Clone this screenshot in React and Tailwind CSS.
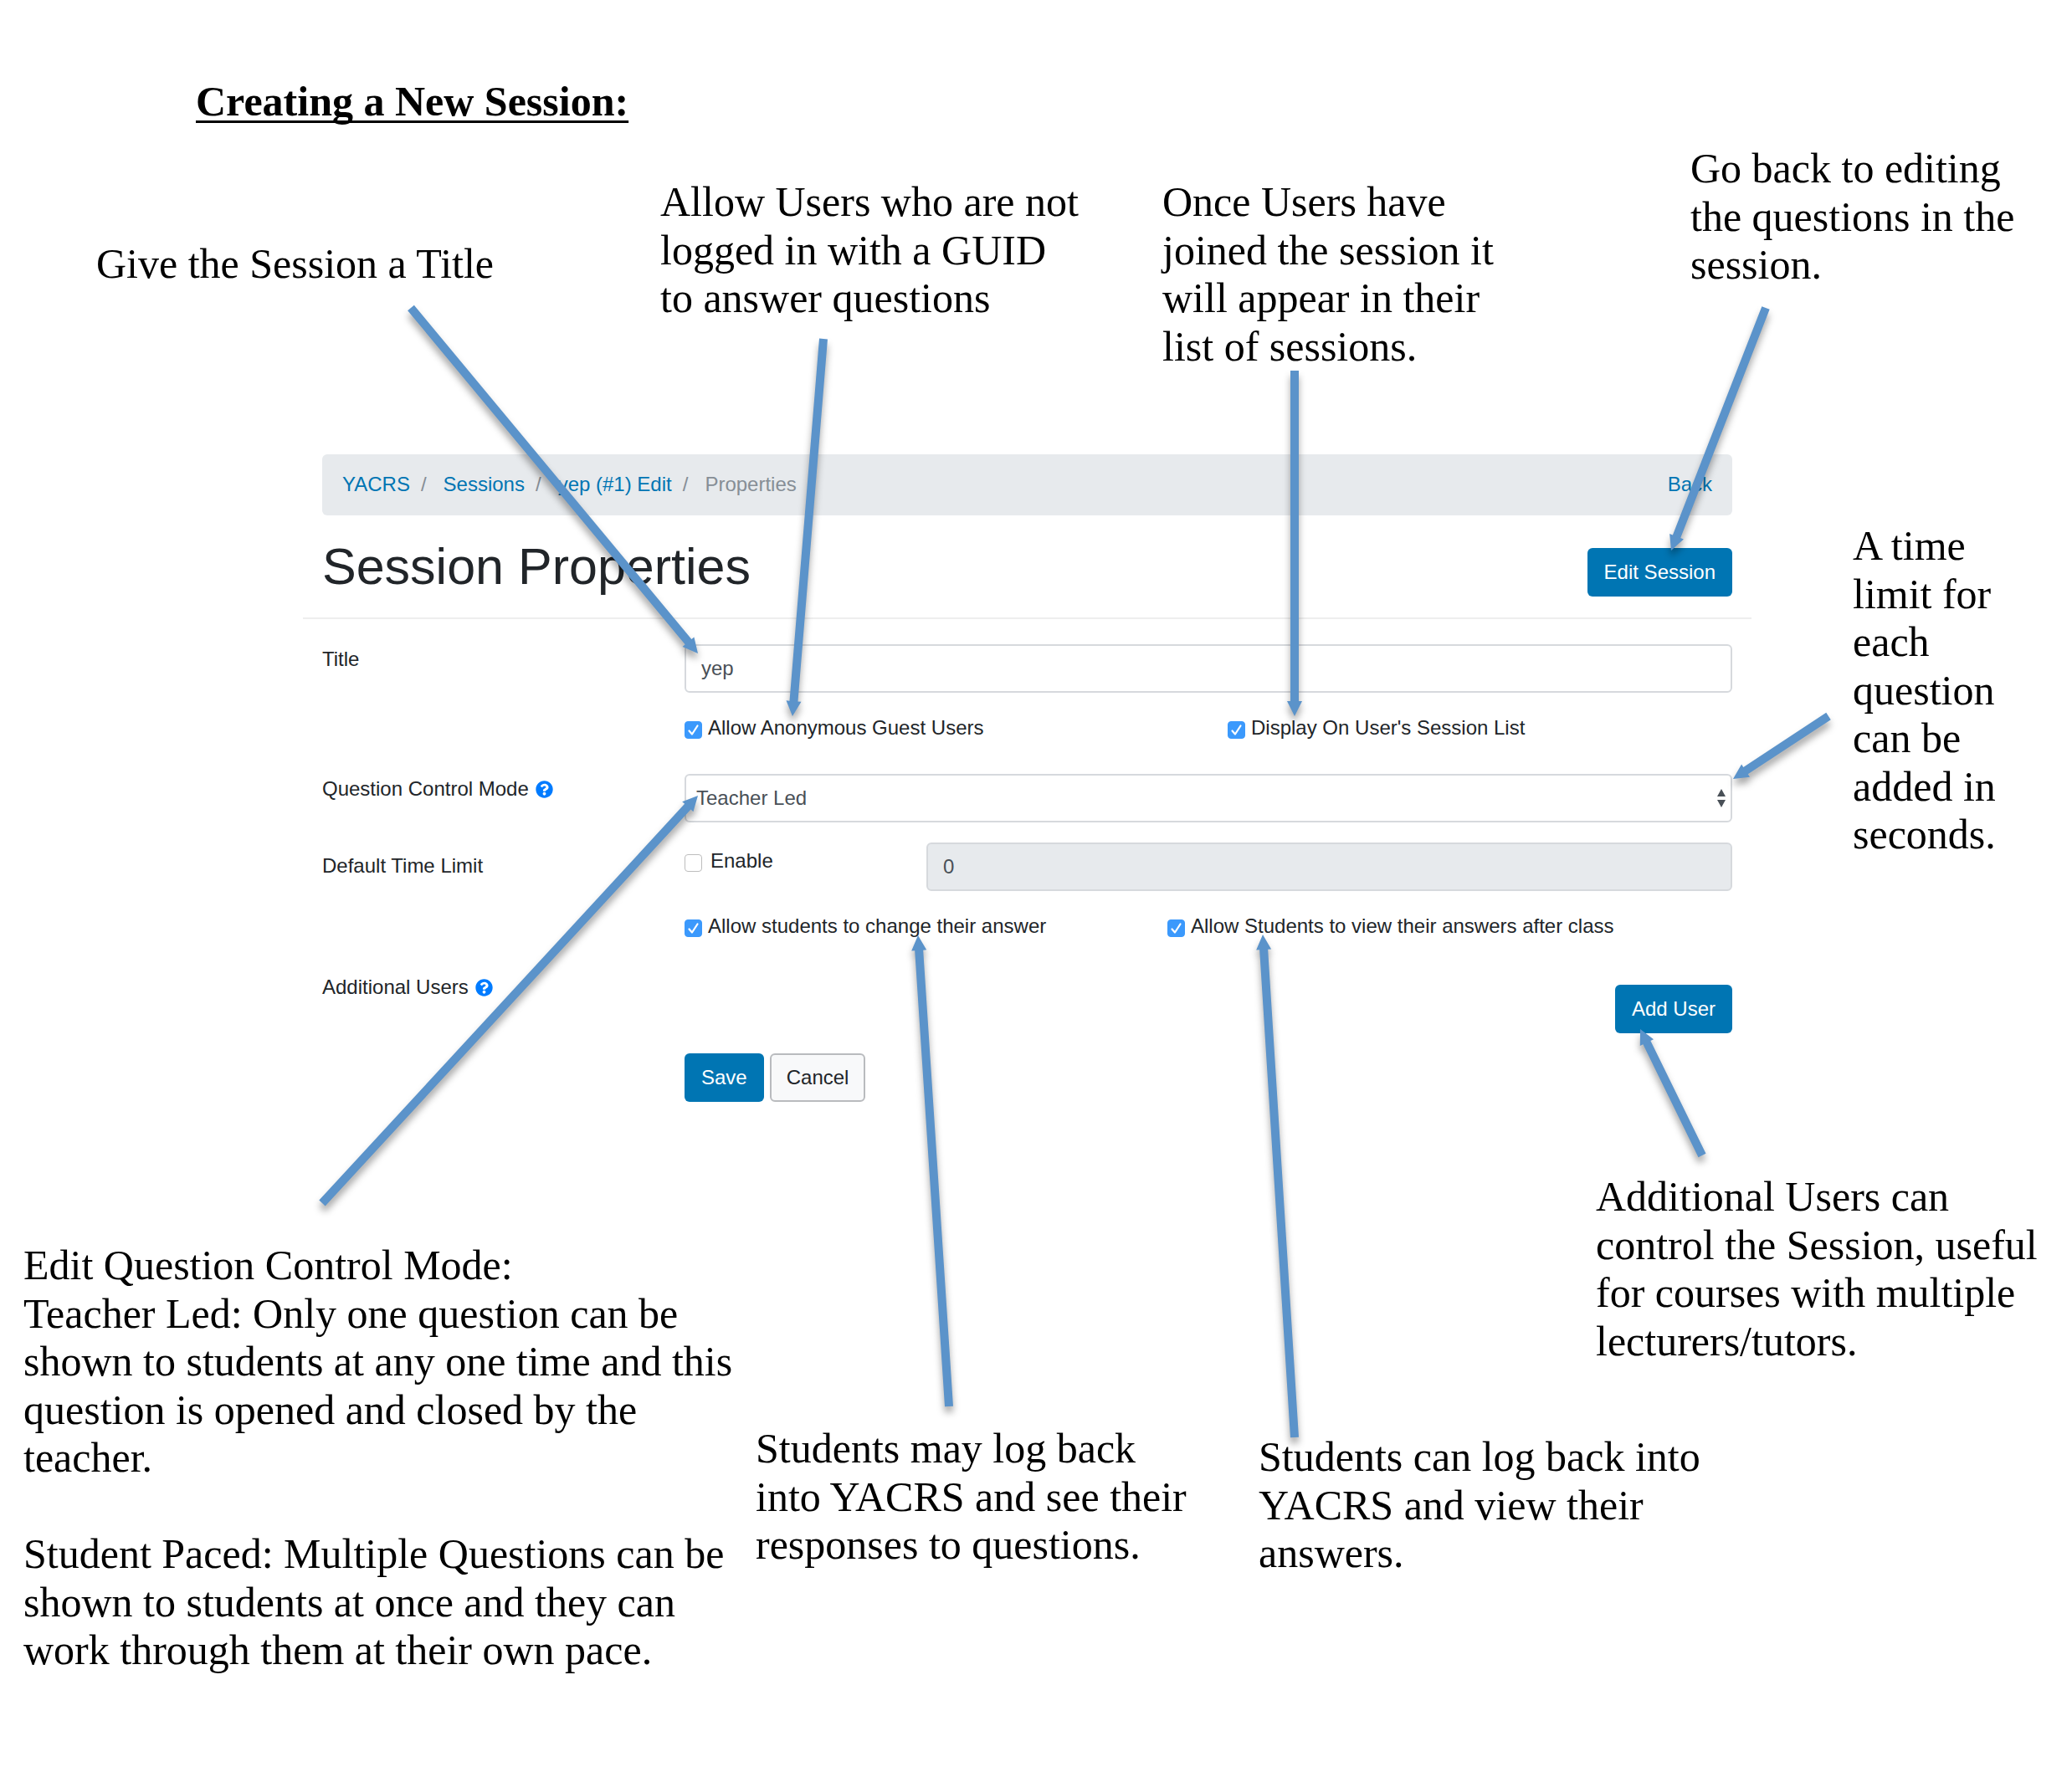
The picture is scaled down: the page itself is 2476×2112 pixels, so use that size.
import React from "react";
import { FaQuestionCircle } from "react-icons/fa";

const notes = [
  { place: "left-[115px] top-[287px]", text: "Give the Session a Title" },
  {
    place: "left-[789px] top-[213px]",
    text: "Allow Users who are not\nlogged in with a GUID\nto answer questions",
  },
  {
    place: "left-[1389px] top-[213px]",
    text: "Once Users have\njoined the session it\nwill appear in their\nlist of sessions.",
  },
  {
    place: "left-[2020px] top-[173px]",
    text: "Go back to editing\nthe questions in the\nsession.",
  },
  {
    place: "left-[2214px] top-[624px]",
    text: "A time\nlimit for\neach\nquestion\ncan be\nadded in\nseconds.",
  },
  {
    place: "left-[1907px] top-[1402px]",
    text: "Additional Users can\ncontrol the Session, useful\nfor courses with multiple\nlecturers/tutors.",
  },
  {
    place: "left-[28px] top-[1484px]",
    text: "Edit Question Control Mode:\nTeacher Led: Only one question can be\nshown to students at any one time and this\nquestion is opened and closed by the\nteacher.\n\nStudent Paced: Multiple Questions can be\nshown to students at once and they can\nwork through them at their own pace.",
  },
  {
    place: "left-[903px] top-[1703px]",
    text: "Students may log back\ninto YACRS and see their\nresponses to questions.",
  },
  {
    place: "left-[1504px] top-[1713px]",
    text: "Students can log back into\nYACRS and view their\nanswers.",
  },
];

// Each arrow runs from its note to the control it explains: [x1, y1, x2, y2].
const arrows = [
  [491, 368, 834, 781],
  [984, 405, 947, 856],
  [1547, 443, 1547, 856],
  [2110, 368, 1997, 658],
  [2185, 856, 2071, 931],
  [385, 1438, 834, 951],
  [1134, 1681, 1097, 1118],
  [1547, 1718, 1509, 1117],
  [2034, 1381, 1960, 1230],
];

function Arrow({ from }) {
  const [x1, y1, x2, y2] = from;
  const length = Math.hypot(x2 - x1, y2 - y1);
  const angle = (Math.atan2(y2 - y1, x2 - x1) * 180) / Math.PI;
  const neck = length - 18;
  return (
    <polygon
      fill="#5b93ca"
      transform={`translate(${x1} ${y1}) rotate(${angle})`}
      points={`0,-5 ${neck},-5 ${neck},-9 ${length},0 ${neck},9 ${neck},5 0,5`}
    />
  );
}

function Check({ id, label, checked = false, gap = "gap-[7px]" }) {
  return (
    <div className={`flex items-center ${gap}`}>
      <span className="relative mt-1 block size-[21px] shrink-0">
        <input
          id={id}
          type="checkbox"
          defaultChecked={checked}
          className="peer block size-full appearance-none rounded-[4px] border border-[#bdbdbd] bg-white checked:border-[#3b99fc] checked:bg-[#3b99fc]"
        />
        <svg
          viewBox="0 0 21 21"
          className="pointer-events-none absolute inset-0 hidden size-full peer-checked:block"
          fill="none"
          stroke="white"
          strokeWidth="2.2"
          strokeLinecap="round"
          strokeLinejoin="round"
        >
          <path d="M5.5 11.5 9 15.5 15.5 5.5" />
        </svg>
      </span>
      <label htmlFor={id}>{label}</label>
    </div>
  );
}

function Help({ label }) {
  return (
    <button type="button" aria-label={label} className="text-[21px] text-[#007bff]">
      <FaQuestionCircle />
    </button>
  );
}

function Row({ label, children, className = "" }) {
  return (
    <div className={`flex items-start ${className}`}>
      <div className="w-[433px] shrink-0">{label}</div>
      <div className="min-w-0 flex-1">{children}</div>
    </div>
  );
}

const primary = "h-[58px] rounded-[6px] bg-[#0075b3] px-5 text-white";
const field = "h-[58px] w-full rounded-[6px] border-2 border-[#d6d9dd] text-[#495057]";

export default function App() {
  return (
    <div className="relative min-h-screen overflow-hidden bg-white text-black">
      <h1 className="pt-[92px] pl-[234px] font-['Liberation_Serif',serif] text-[50px] leading-[58px] font-bold underline decoration-[3px] underline-offset-[6px] [text-decoration-skip-ink:none]">
        Creating a New Session:
      </h1>

      <main className="mt-[393px] mr-[406px] ml-[385px] font-['Liberation_Sans',sans-serif] text-[24px] leading-9 text-[#212529]">
        <nav
          aria-label="Breadcrumb"
          className="flex h-[73px] items-center justify-between rounded-[6px] bg-[#e7eaed] px-6 pb-[2px] text-[#0075b3]"
        >
          <ol className="flex">
            <li><a href="#home">YACRS</a></li>
            <li className="mr-5 ml-[13px] text-[#868e96]">/</li>
            <li><a href="#sessions">Sessions</a></li>
            <li className="mr-5 ml-[13px] text-[#868e96]">/</li>
            <li><a href="#edit">yep (#1) Edit</a></li>
            <li className="mr-5 ml-[13px] text-[#868e96]">/</li>
            <li aria-current="page" className="text-[#868e96]">Properties</li>
          </ol>
          <a href="#back">Back</a>
        </nav>

        <div className="mt-[25px] flex items-end justify-between">
          <h2 className="text-[61px] leading-[72px]">Session Properties</h2>
          <button type="button" className={primary}>Edit Session</button>
        </div>
        <hr className="-mx-[23px] mt-[25px] mb-[30px] border-t-2 border-[#eeeeee]" />

        <form onSubmit={(e) => e.preventDefault()}>
          <Row label={<label htmlFor="title">Title</label>}>
            <input id="title" type="text" defaultValue="yep" className={`${field} bg-white px-[18px]`} />
          </Row>

          <Row className="mt-6">
            <div className="flex">
              <div className="w-[649px]">
                <Check id="guests" label="Allow Anonymous Guest Users" checked />
              </div>
              <Check id="listed" label="Display On User's Session List" checked />
            </div>
          </Row>

          <Row
            className="mt-[37px]"
            label={
              <div className="flex items-center gap-2">
                <label htmlFor="mode">Question Control Mode</label>
                <Help label="About question control mode" />
              </div>
            }
          >
            <div className="relative">
              <select id="mode" className={`${field} appearance-none bg-white px-3`}>
                <option>Teacher Led</option>
                <option>Student Paced</option>
              </select>
              <svg
                viewBox="0 0 12 22"
                fill="#495057"
                className="pointer-events-none absolute top-[18px] right-[7px] h-[22px] w-3"
              >
                <path d="M1 9 6 0l5 9zM1 13h10l-5 9z" />
              </svg>
            </div>
          </Row>

          <Row
            className="mt-6"
            label={<label htmlFor="limit" className="block pt-[10px]">Default Time Limit</label>}
          >
            <div className="flex">
              <div className="w-[289px] pt-1">
                <Check id="enable" label="Enable" gap="gap-[10px]" />
              </div>
              <div className="flex-1">
                <input id="limit" type="text" defaultValue="0" disabled className={`${field} bg-[#e7eaed] px-[18px]`} />
              </div>
            </div>
          </Row>

          <Row className="mt-6">
            <div className="flex">
              <div className="w-[577px]">
                <Check id="change" label="Allow students to change their answer" checked />
              </div>
              <Check id="view" label="Allow Students to view their answers after class" checked />
            </div>
          </Row>

          <Row
            className="mt-[37px]"
            label={
              <div className="flex items-center gap-2">
                <span>Additional Users</span>
                <Help label="About additional users" />
              </div>
            }
          >
            <div className="flex justify-end pt-[15px]">
              <button type="button" className={primary}>Add User</button>
            </div>
          </Row>

          <Row className="mt-6">
            <div className="flex gap-[7px]">
              <button type="submit" className={primary}>Save</button>
              <button
                type="button"
                className="h-[58px] rounded-[6px] border-2 border-[#b9bbbe] bg-[#f8f9fa] px-[18px] text-[#212529]"
              >
                Cancel
              </button>
            </div>
          </Row>
        </form>
      </main>

      {notes.map((note) => (
        <p
          key={note.text}
          className={`absolute font-['Liberation_Serif',serif] text-[50px] leading-[1.15] whitespace-pre ${note.place}`}
        >
          {note.text}
        </p>
      ))}

      <svg
        aria-hidden="true"
        width="2476"
        height="2112"
        className="pointer-events-none absolute top-0 left-0 max-w-none drop-shadow-[0_7px_4px_rgba(0,0,0,0.35)]"
      >
        {arrows.map((a) => (
          <Arrow key={a.join()} from={a} />
        ))}
      </svg>
    </div>
  );
}
